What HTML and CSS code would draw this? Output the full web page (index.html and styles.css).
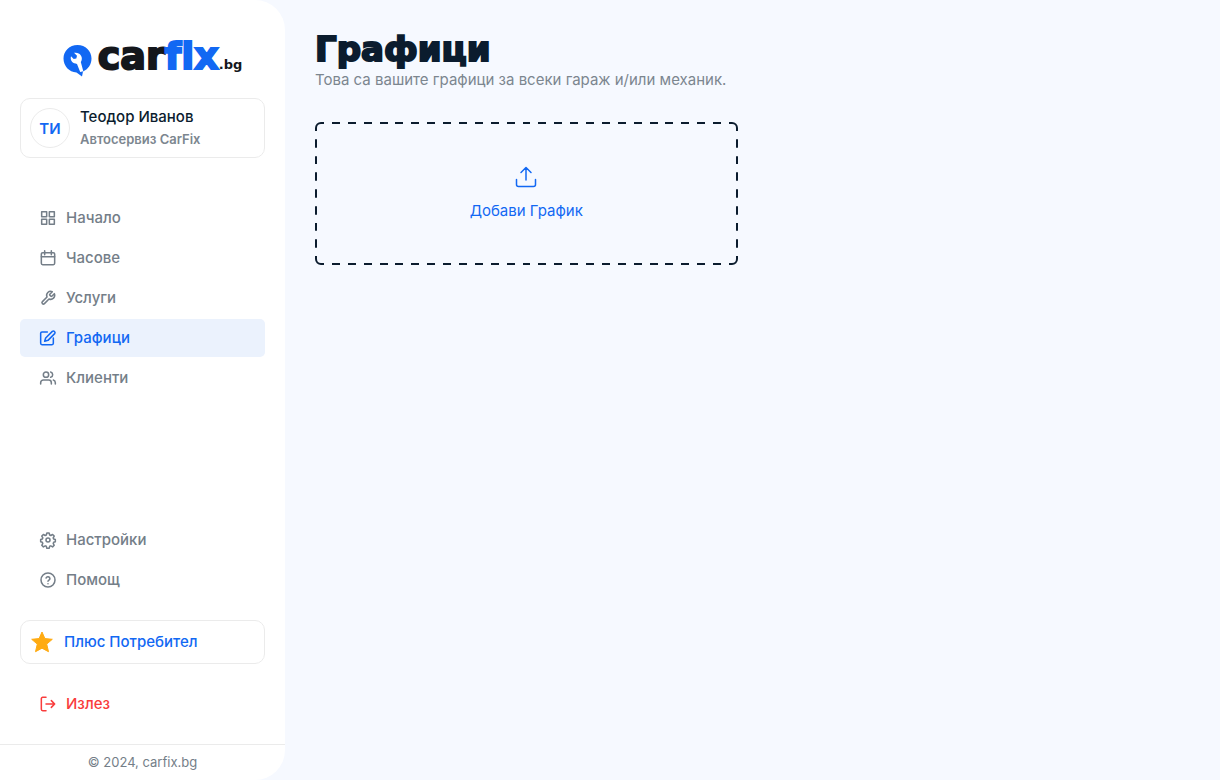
FILE: index.html
```html
<!DOCTYPE html>
<html lang="bg">
<head>
<meta charset="utf-8">
<meta name="viewport" content="width=device-width, initial-scale=1">
<title>Графици – carfix.bg</title>
<link rel="stylesheet" href="styles.css">
</head>
<body>
<div class="app">
  <aside class="sidebar">
    <div class="sidebar-body">
      <a class="logo" href="#">
        <svg class="logo-mark" viewBox="0 0 29 33" aria-hidden="true">
          <path fill="#1268f3" d="M14.500 1C22.500 1 28.500 7 28.500 14.500C28.500 20.500 25 25.500 20 27.500L19 32.500L13.500 28.500C6 28 .5 22 .5 14.500C.5 7 6.500 1 14.500 1Z"/>
          <path fill="#fff" d="M11 8.800L14 11.700L13.300 14.500L10.700 15L8 12.300C7 16 9 19.200 12.600 19.400L14 20L17.200 28L20.300 27.300L17.800 18C19.800 15.500 18.900 11.500 16.200 9.800C14.500 8.700 12.700 8.400 11 8.800Z"/>
        </svg>
        <span class="logo-text"><span>car</span><span class="logo-blue">fix</span><span class="logo-tld">.bg</span></span>
      </a>
      <div class="card profile">
        <span class="avatar">ТИ</span>
        <div class="profile-text">
          <span class="profile-name">Теодор Иванов</span>
          <span class="profile-shop">Автосервиз CarFix</span>
        </div>
      </div>
      <nav class="menu">
        <a class="item" href="#"><svg class="icon" viewBox="0 0 24 24"><path d="M2.500 2.500h7.500v7.500H2.500zM14 2.500h7.500v7.500H14zM14 14h7.500v7.500H14zM2.500 14h7.500v7.500H2.500z"/></svg>Начало</a>
        <a class="item" href="#"><svg class="icon" viewBox="0 0 24 24"><rect x="2" y="4" width="20" height="18" rx="2"/><path d="M2 10h20M7 1v6M17 1v6"/></svg>Часове</a>
        <a class="item" href="#"><svg class="icon" viewBox="0 0 24 24"><path d="M14.700 6.300a1 1 0 0 0 0 1.400l1.600 1.600a1 1 0 0 0 1.400 0l3.770-3.770a6 6 0 0 1-7.940 7.940l-6.910 6.910a2.120 2.120 0 0 1-3-3l6.910-6.910a6 6 0 0 1 7.940-7.940z"/></svg>Услуги</a>
        <a class="item item-active" href="#" aria-current="page"><svg class="icon" viewBox="0 0 24 24"><path d="M11 3H3a2 2 0 0 0-2 2v15a2 2 0 0 0 2 2h15a2 2 0 0 0 2-2v-8"/><path d="M18.500 2a2.500 2.500 0 0 1 3.500 3.500L12 15.500l-5 1.500 1.500-5z"/></svg>Графици</a>
        <a class="item" href="#"><svg class="icon" viewBox="0 0 24 24"><path d="M17 21v-2a4 4 0 0 0-4-4H5a4 4 0 0 0-4 4v2"/><circle cx="9" cy="7" r="4"/><path d="M23 21v-2a4 4 0 0 0-3-3.870M16 3.130a4 4 0 0 1 0 7.750"/></svg>Клиенти</a>
      </nav>
      <nav class="menu menu-bottom">
        <a class="item" href="#"><svg class="icon" viewBox="0 0 24 24"><circle cx="12" cy="12" r="3"/><path d="M10.300 1.500h3.400l.8 3 1.700.7 2.700-1.500 2.400 2.400-1.500 2.700.7 1.700 2.500.8v3.400l-2.500.8-.7 1.700 1.500 2.700-2.400 2.400-2.700-1.500-1.700.7-.8 3h-3.400l-.8-3-1.700-.7-2.700 1.500-2.400-2.400 1.500-2.700-.7-1.700-2.500-.8v-3.400l2.500-.8.7-1.700-1.500-2.700 2.400-2.400 2.700 1.500 1.700-.7z"/></svg>Настройки</a>
        <a class="item" href="#"><svg class="icon" viewBox="0 0 24 24"><circle cx="12" cy="12" r="10.500"/><path d="M9.100 9a3 3 0 0 1 5.800 1c0 2-2.900 2.500-2.900 4M12 17.500v.1"/></svg>Помощ</a>
      </nav>
      <a class="card plus" href="#">
        <svg class="star" viewBox="0 0 22 22" aria-hidden="true"><path d="M11 1L13.900 7.600L21.300 8.300L15.700 13.100L17.500 20.700L11 17.200L4.500 20.700L6.300 13.100L.7 8.300L8.100 7.600Z"/></svg>
        Плюс Потребител
      </a>
      <button class="item logout" type="button"><svg class="icon" viewBox="0 0 24 24"><path d="M9 22H4a2 2 0 0 1-2-2V4a2 2 0 0 1 2-2h5M17 17l5-5-5-5M22 12H9"/></svg>Излез</button>
    </div>
    <footer class="copyright">© 2024, carfix.bg</footer>
  </aside>
  <main class="content">
    <h1 class="title">Графици</h1>
    <p class="subtitle">Това са вашите графици за всеки гараж и/или механик.</p>
    <div class="grid">
      <button class="add" type="button">
        <svg class="upload" viewBox="0 0 22 22" aria-hidden="true"><path d="M1.500 13.500v5a2 2 0 0 0 2 2h15a2 2 0 0 0 2-2v-5M11 14V1.500M6 6.500l5-5 5 5"/></svg>
        Добави График
      </button>
    </div>
  </main>
</div>
</body>
</html>
```
FILE: styles.css
```css
* {
  box-sizing: border-box;
}

body {
  margin: 0;
  background: #f6f9ff;
  color: #0b1c2e;
  font-family: Inter, sans-serif;
  font-size: 15px;
}

.app {
  display: flex;
  min-height: 100vh;
}

.sidebar {
  display: flex;
  flex-direction: column;
  flex: 0 0 285px;
  background: #fff;
  border-radius: 0 30px 30px 0;
  overflow: hidden;
}

.sidebar-body {
  display: flex;
  flex-direction: column;
  flex: 1;
  padding: 38px 20px 21px;
}

.logo {
  display: flex;
  align-items: center;
  justify-content: center;
  gap: 6px;
  height: 44px;
  margin: 0 0 16px 20px;
  color: #14171c;
  text-decoration: none;
}

.logo-mark {
  flex: none;
  width: 29px;
  height: 33px;
}

.logo-text {
  font: bold 38px/40px "DejaVu Sans", sans-serif;
  font-variant-ligatures: none;
  -webkit-text-stroke: 2px currentColor;
  white-space: nowrap;
}

.logo-blue {
  color: #1268f3;
}

.logo-tld {
  font-size: 13px;
  -webkit-text-stroke: 0;
}

.card {
  display: flex;
  align-items: center;
  gap: 10px;
  border: 1px solid #ebebeb;
  border-radius: 10px;
  padding: 0 9px;
}

.profile {
  height: 60px;
}

.avatar {
  display: grid;
  place-items: center;
  width: 40px;
  height: 40px;
  border: 1px solid #ebebeb;
  border-radius: 50%;
  color: #1268f3;
  font-weight: 600;
}

.profile-text {
  display: flex;
  flex-direction: column;
  gap: 3px;
  padding-bottom: 2px;
}

.profile-name {
  font-weight: 500;
  line-height: 20px;
}

.profile-shop {
  color: #7c868f;
  font-size: 13px;
  font-weight: 600;
  line-height: 18px;
}

.menu {
  display: flex;
  flex-direction: column;
  gap: 2px;
  margin-top: 41px;
}

.menu-bottom {
  margin-top: auto;
}

.item {
  display: flex;
  align-items: center;
  gap: 10px;
  height: 38px;
  padding: 0 20px;
  border: 0;
  border-radius: 5px;
  background: none;
  color: #747e88;
  font: 500 15px/20px Inter, sans-serif;
  text-decoration: none;
}

.item-active {
  background: #ebf2fd;
  color: #1268f3;
}

.icon {
  flex: none;
  width: 16px;
  height: 16px;
  overflow: visible;
  fill: none;
  stroke: currentColor;
  stroke-width: 2.3;
  stroke-linecap: round;
  stroke-linejoin: round;
}

.plus {
  height: 44px;
  margin: 21px 0;
  padding: 0 10px 1px;
  gap: 11px;
  color: #1268f3;
  font-weight: 500;
  text-decoration: none;
}

.star {
  width: 22px;
  height: 22px;
  fill: #ffab12;
  stroke: #ffab12;
  stroke-linejoin: round;
}

.logout {
  color: #f93c3c;
}

.copyright {
  border-top: 1px solid #ebebeb;
  color: #747e88;
  font-size: 13px;
  line-height: 35px;
  text-align: center;
}

.content {
  flex: 1;
  padding: 30px;
}

.title {
  margin: 0;
  padding-bottom: 2px;
  font: bold 34px/38px "DejaVu Sans", sans-serif;
  -webkit-text-stroke: 2px currentColor;
}

.subtitle {
  margin: 0 0 32px;
  color: #7c868f;
  line-height: 20px;
}

.grid {
  display: grid;
  grid-template-columns: repeat(2, 1fr);
  gap: 30px;
}

.add {
  display: flex;
  flex-direction: column;
  align-items: center;
  gap: 13px;
  padding: 42px 20px;
  border: 2px solid transparent;
  border-image-source: url("data:image/svg+xml,%3Csvg xmlns='http://www.w3.org/2000/svg' width='42' height='42' fill='none' stroke='%230b1c2e' stroke-width='2'%3E%3Cpath d='M1 9V6a5 5 0 0 1 5-5h3M33 1h3a5 5 0 0 1 5 5v3M41 33v3a5 5 0 0 1-5 5h-3M9 41H6a5 5 0 0 1-5-5v-3M17 1h8M17 41h8M1 17v8M41 17v8'/%3E%3C/svg%3E");
  border-image-slice: 13;
  border-image-width: 13px;
  border-image-repeat: round;
  background: none;
  color: #1268f3;
  font: 15px/20px Inter, sans-serif;
}

.upload {
  width: 22px;
  height: 22px;
  fill: none;
  stroke: currentColor;
  stroke-width: 1.5;
  stroke-linecap: round;
  stroke-linejoin: round;
}
```
